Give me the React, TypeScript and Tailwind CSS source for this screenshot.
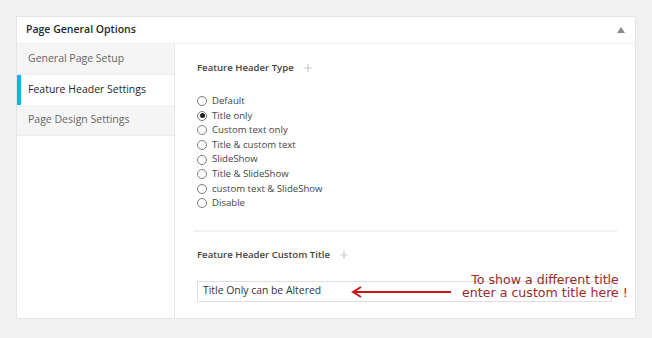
import { useState } from "react";

const options = [
  "Default",
  "Title only",
  "Custom text only",
  "Title & custom text",
  "SlideShow",
  "Title & SlideShow",
  "custom text & SlideShow",
  "Disable",
];

const tabs = ["General Page Setup", "Feature Header Settings", "Page Design Settings"];

const Plus = () => (
  <svg width="8" height="8" viewBox="0 0 8 8" className="ml-[10px]">
    <path d="M4 0v8M0 4h8" stroke="#ccc" strokeWidth="1.2" />
  </svg>
);

const App = () => {
  const [selected, setSelected] = useState("Title only");
  const [active] = useState(1);

  return (
    <div className="w-[652px] h-[338px] bg-[#f1f1f1] pt-[16px] pl-[16px] font-['Open_Sans',sans-serif]">
      <div className="w-[620px] h-[303px] bg-white border border-[#e5e5e5] flex flex-col">
        <div className="h-[27px] border-b border-[#eee] flex items-center justify-between pl-[9px] pr-[10px]">
          <span className="text-[10.5px] font-semibold text-[#23282d]">Page General Options</span>
          <svg width="8" height="6" viewBox="0 0 8 6">
            <path d="M4 0L8 6H0z" fill="#8a8a8a" />
          </svg>
        </div>
        <div className="flex flex-1">
          <div className="w-[158px] border-r border-[#e8e8e8] flex flex-col">
            {tabs.map((t, i) => (
              <div
                key={t}
                className={
                  i === active
                    ? "h-[30px] flex items-center pl-[7px] bg-white border-l-4 border-[#00b9eb] text-[10.5px] text-[#23282d]"
                    : "h-[31px] flex items-center pl-[11px] bg-[#f5f5f5] border-b border-[#eee] text-[10.5px] text-[#666]"
                }
              >
                {t}
              </div>
            ))}
          </div>
          <div className="flex-1 pl-[22px] pr-[18px] flex flex-col">
            <div className="flex items-center mt-[17px] h-[14px]">
              <span className="text-[9.6px] font-semibold text-[#444]">Feature Header Type</span>
              <Plus />
            </div>
            <div className="mt-[19px] flex flex-col">
              {options.map((o) => (
                <label key={o} className="h-[14.6px] flex items-center text-[9.6px] text-[#444] cursor-pointer" onClick={() => setSelected(o)}>
                  <span className="w-[10px] h-[10px] rounded-full border border-[#7e7e7e] flex items-center justify-center mr-[5px] bg-white">
                    {selected === o && <span className="w-[5px] h-[5px] rounded-full bg-[#222]" />}
                  </span>
                  {o}
                </label>
              ))}
            </div>
            <div className="mt-[19px] -ml-[4px] border-t-2 border-[#f2f2f2]" />
            <div className="flex items-center mt-[16px] h-[14px]">
              <span className="text-[9.6px] font-semibold text-[#444]">Feature Header Custom Title</span>
              <Plus />
            </div>
            <div className="relative mt-[19px] w-[415px] h-[21px] border border-[#ddd] flex items-center pl-[5px] text-[10.4px] text-[#333]">
              Title Only can be Altered
              <svg width="102" height="12" viewBox="0 0 102 12" className="absolute left-[153px] top-[4px]">
                <path d="M4 6H100" stroke="#c8161d" strokeWidth="2" />
                <path d="M10 1L2 6L10 11" stroke="#c8161d" strokeWidth="2" fill="none" />
              </svg>
              <div className="absolute left-[255px] -top-[9px] w-[184px] text-center leading-[13px] text-[12.6px] text-[#9a2b2b] font-['DejaVu_Sans',sans-serif]">
                To show a different title
                <br />
                enter a custom title here !
              </div>
            </div>
          </div>
        </div>
      </div>
    </div>
  );
};

export default App;
